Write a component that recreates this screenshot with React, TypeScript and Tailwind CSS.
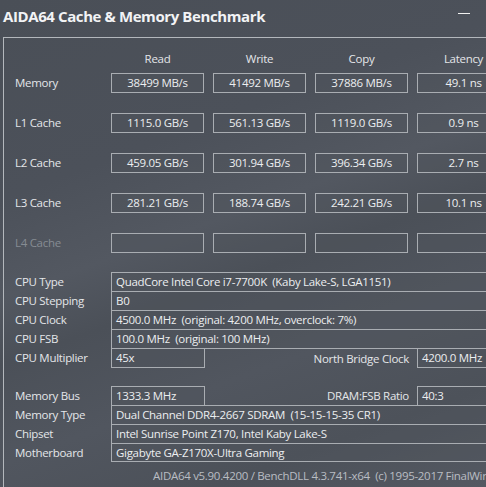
import React from "react";

const F = { fontFamily: "'Open Sans', 'Noto Sans', sans-serif" };

function Box({ children }: { children?: React.ReactNode }) {
  return (
    <div className="w-[93px] h-[20px] border border-[#a9adb2] bg-[#50555d]/40 flex items-center justify-center text-[11.5px] text-[#eceef0] whitespace-nowrap">
      {children}
    </div>
  );
}

function BenchRow({ label, vals, dim }: { label: string; vals: string[]; dim?: boolean }) {
  return (
    <div className="flex items-center h-[20px]">
      <div className={`w-[96px] text-[11.5px] ${dim ? "text-[#868c93]" : "text-[#e4e6e9]"}`}>{label}</div>
      <div className="flex gap-[9px]">
        {vals.map((v, i) => (
          <Box key={i}>{v}</Box>
        ))}
      </div>
    </div>
  );
}

function InfoRow({ label, value, last }: { label: string; value: string; last?: boolean }) {
  return (
    <div className="flex h-[19px]">
      <div className="w-[96px] text-[11.5px] text-[#e4e6e9] flex items-center">{label}</div>
      <div
        className={`flex-1 border-l border-t ${last ? "border-b" : ""} border-[#a9adb2] bg-[#50555d]/40 pl-[4px] flex items-center text-[11.5px] text-[#eceef0] whitespace-pre`}
      >
        {value}
      </div>
    </div>
  );
}

export default function App() {
  return (
    <div
      className="w-[486px] h-[487px] overflow-hidden relative text-[#eceef0] tracking-[-0.3px] bg-[#4a4f57] bg-[linear-gradient(160deg,#4a4f57_0%,#4c515a_30%,#535861_45%,#4b5058_55%,#51565f_70%,#4c5159_85%,#545962_100%)]"
      style={F}
    >
      {/* title bar */}
      <div className="h-[37px] flex items-start justify-between">
        <div className="pl-[3px] pt-[5px] text-[15px] font-bold text-[#f2f3f5] tracking-[-0.4px]">
          AIDA64 Cache &amp; Memory Benchmark
        </div>
        <div className="mr-[16px] mt-[13px] w-[12px] h-[1px] bg-[#f0f0f0]" />
      </div>

      {/* panel */}
      <div className="ml-[3px] w-[520px] h-[460px] border-l border-t border-[#b3b7bc] pl-[11px]">
        {/* header */}
        <div className="flex h-[35px] items-center pt-[7px]">
          <div className="w-[96px]" />
          <div className="flex gap-[9px] text-[11.5px] text-[#e4e6e9]">
            {["Read", "Write", "Copy", "Latency"].map((h) => (
              <div key={h} className="w-[93px] text-center">
                {h}
              </div>
            ))}
          </div>
        </div>

        <div className="flex flex-col gap-[20px]">
          <BenchRow label="Memory" vals={["38499 MB/s", "41492 MB/s", "37886 MB/s", "49.1 ns"]} />
          <BenchRow label="L1 Cache" vals={["1115.0 GB/s", "561.13 GB/s", "1119.0 GB/s", "0.9 ns"]} />
          <BenchRow label="L2 Cache" vals={["459.05 GB/s", "301.94 GB/s", "396.34 GB/s", "2.7 ns"]} />
          <BenchRow label="L3 Cache" vals={["281.21 GB/s", "188.74 GB/s", "242.21 GB/s", "10.1 ns"]} />
          <BenchRow label="L4 Cache" dim vals={["", "", "", ""]} />
        </div>

        {/* CPU info */}
        <div className="mt-[19px]">
          <InfoRow label="CPU Type" value="QuadCore Intel Core i7-7700K  (Kaby Lake-S, LGA1151)" />
          <InfoRow label="CPU Stepping" value="B0" />
          <InfoRow label="CPU Clock" value="4500.0 MHz  (original: 4200 MHz, overclock: 7%)" />
          <InfoRow label="CPU FSB" value="100.0 MHz  (original: 100 MHz)" />
          <div className="flex h-[20px]">
            <div className="w-[96px] text-[11.5px] text-[#e4e6e9] flex items-center">CPU Multiplier</div>
            <div className="w-[94px] border border-[#a9adb2] bg-[#50555d]/40 pl-[4px] flex items-center text-[11.5px]">
              45x
            </div>
            <div className="w-[212px] border-t border-[#a9adb2] pr-[8px] flex items-center justify-end text-[11.5px] text-[#e4e6e9]">
              North Bridge Clock
            </div>
            <div className="flex-1 border border-[#a9adb2] bg-[#50555d]/40 pl-[4px] flex items-center text-[11.5px] whitespace-nowrap">
              4200.0 MHz
            </div>
          </div>
        </div>

        {/* Memory info */}
        <div className="mt-[18px]">
          <div className="flex h-[19px]">
            <div className="w-[96px] text-[11.5px] text-[#e4e6e9] flex items-center">Memory Bus</div>
            <div className="w-[94px] border-l border-t border-r border-[#a9adb2] bg-[#50555d]/40 pl-[4px] flex items-center text-[11.5px]">
              1333.3 MHz
            </div>
            <div className="w-[212px] pr-[8px] flex items-center justify-end text-[11.5px] text-[#e4e6e9]">
              DRAM:FSB Ratio
            </div>
            <div className="flex-1 border-l border-t border-[#a9adb2] bg-[#50555d]/40 pl-[4px] flex items-center text-[11.5px]">
              40:3
            </div>
          </div>
          <InfoRow label="Memory Type" value="Dual Channel DDR4-2667 SDRAM  (15-15-15-35 CR1)" />
          <InfoRow label="Chipset" value="Intel Sunrise Point Z170, Intel Kaby Lake-S" />
          <InfoRow label="Motherboard" value="Gigabyte GA-Z170X-Ultra Gaming" last />
        </div>

        <div className="mt-[5px] pl-[138px] text-[11.5px] text-[#b9bdc3] whitespace-pre">
          AIDA64 v5.90.4200 / BenchDLL 4.3.741-x64  (c) 1995-2017 FinalWire Ltd.
        </div>
      </div>
    </div>
  );
}
